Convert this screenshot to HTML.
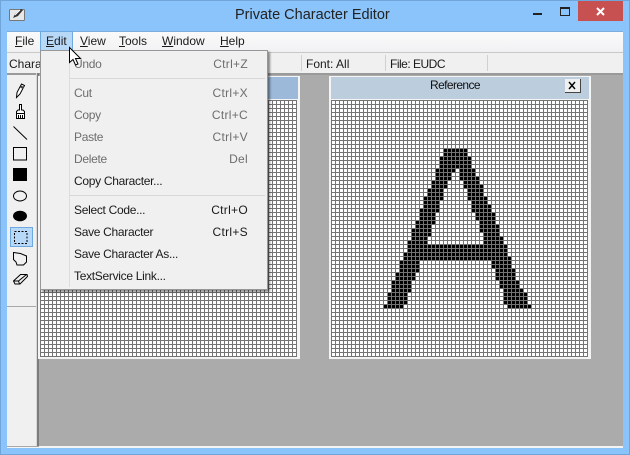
<!DOCTYPE html>
<html>
<head>
<meta charset="utf-8">
<style>
html,body{margin:0;padding:0;width:630px;height:455px;overflow:hidden;background:#8ac4fb}
body{position:relative;font:12px "Liberation Sans",sans-serif;color:#1a1a1a}
.a{position:absolute}
.t{position:absolute;white-space:nowrap;line-height:14px}
.m{letter-spacing:-.3px}
.g{color:#6d6d6d}
.r{position:absolute;white-space:nowrap;line-height:14px;right:382px;letter-spacing:.3px}
.grid{position:absolute;top:100px;width:257px;height:257px;background-image:linear-gradient(to right,#747474 1px,transparent 1px),linear-gradient(#747474 1px,transparent 1px);background-size:4px 4px}
svg{position:absolute;left:0;top:0}
u{text-decoration:underline}
</style>
</head>
<body>
<div class="a" style="left:0;top:0;width:630px;height:1px;background:#6fa5d8"></div>
<div class="a" style="left:0;top:0;width:1px;height:455px;background:#6fa5d8"></div>
<div class="a" style="left:629px;top:0;width:1px;height:455px;background:#6fa5d8"></div>
<div class="a" style="left:0;top:454px;width:630px;height:1px;background:#6fa5d8"></div>

<!-- title bar -->
<div class="t" style="left:235px;top:7px;font-size:14.5px;line-height:17px;color:#222">Private Character Editor</div>
<div class="a" style="left:578px;top:1px;width:45px;height:20px;background:#c75050"></div>
<div class="a" style="left:533px;top:13px;width:9px;height:2px;background:#222"></div>
<div class="a" style="left:560px;top:7px;width:8px;height:6px;border:1px solid #222;border-top-width:2px"></div>

<!-- client -->
<div class="a" style="left:7px;top:31px;width:616px;height:417px;background:#ababab"></div>
<div class="a" style="left:7px;top:31px;width:616px;height:1px;background:#7eaedd"></div>
<div class="a" style="left:7px;top:32px;width:616px;height:19px;background:linear-gradient(#fafafa,#f2f2f4)"></div>
<div class="a" style="left:7px;top:51px;width:616px;height:3px;background:#f0f0f0"></div>
<div class="a" style="left:7px;top:52px;width:616px;height:1px;background:#c8c8c8"></div>
<div class="a" style="left:7px;top:53px;width:616px;height:20px;background:#f0f0f0"></div>
<div class="a" style="left:7px;top:73px;width:616px;height:2px;background:#9a9a9a"></div>
<div class="a" style="left:301px;top:55px;width:1px;height:16px;background:#d0d0d0"></div>
<div class="a" style="left:385px;top:55px;width:1px;height:16px;background:#d0d0d0"></div>
<div class="a" style="left:487px;top:55px;width:1px;height:16px;background:#d0d0d0"></div>
<div class="t" style="left:9px;top:57px">Chara</div>
<div class="t" style="left:306px;top:57px">Font: All</div>
<div class="t" style="left:390px;top:57px;letter-spacing:-.5px">File: EUDC</div>

<!-- left toolbox -->
<div class="a" style="left:7px;top:75px;width:30px;height:371px;background:#f0f0f0"></div>
<div class="a" style="left:7px;top:306px;width:30px;height:1px;background:#a8a8a8"></div>
<div class="a" style="left:36px;top:73px;width:1px;height:373px;background:#d8d8d8"></div>
<div class="a" style="left:37px;top:73px;width:2px;height:374px;background:#7c7c7c"></div>
<div class="a" style="left:7px;top:446px;width:616px;height:2px;background:#f4f4f4"></div>
<div class="a" style="left:7px;top:446px;width:32px;height:1px;background:#a8a8a8"></div>
<div class="a" style="left:10px;top:227px;width:21px;height:18px;background:#b8d8f8;border:1px solid #6ea8e0"></div>

<!-- MDI windows -->
<div class="a" style="left:38px;top:76px;width:262px;height:283px;background:#f4f4f4"></div>
<div class="a" style="left:40px;top:77px;width:258px;height:22px;background:#9db9d9"></div>
<div class="a" style="left:329px;top:76px;width:262px;height:283px;background:#f4f4f4"></div>
<div class="a" style="left:331px;top:77px;width:258px;height:22px;background:#bccddd"></div>
<div class="t" style="left:430px;top:78px;color:#111;letter-spacing:-.6px">Reference</div>
<div class="a" style="left:565px;top:79px;width:15px;height:13px;background:#f0f0f0;border-right:1px solid #444;border-bottom:1px solid #444"></div>

<svg width="630" height="455" viewBox="0 0 630 455">
<rect x="40" y="100" width="257" height="257" fill="#fff"/>
<rect x="331" y="100" width="257" height="257" fill="#fff"/>
<g transform="translate(331,100) scale(4)" shape-rendering="crispEdges">
<path fill="#000" d="M28 12h6v2h-6zM27 14h8v3h-8zM26 17h5v1h-5zM32 17h4v1h-4zM26 18h4v2h-4zM32 18h4v1h-4zM32 19h5v1h-5zM25 20h4v2h-4zM33 20h4v1h-4zM33 21h5v1h-5zM24 22h4v2h-4zM34 22h4v2h-4zM23 24h5v1h-5zM34 24h5v1h-5zM23 25h4v2h-4zM35 25h4v1h-4zM35 26h5v2h-5zM22 27h5v1h-5zM22 28h4v2h-4zM36 28h5v2h-5zM21 30h5v1h-5zM37 30h4v1h-4zM21 31h4v1h-4zM37 31h5v2h-5zM20 32h5v2h-5zM38 33h4v1h-4zM20 34h4v1h-4zM38 34h5v2h-5zM19 35h5v1h-5zM19 36h25v2h-25zM18 38h26v1h-26zM18 39h27v1h-27zM17 40h5v3h-5zM40 40h5v2h-5zM41 42h5v3h-5zM16 43h5v2h-5zM15 45h5v3h-5zM42 45h5v2h-5zM43 47h5v1h-5zM14 48h5v3h-5zM43 48h6v3h-6zM13 51h5v1h-5zM44 51h6v1h-6z"/>
</g>

<!-- close X glyphs -->
<path d="M597 8l7 7M604 8l-7 7" stroke="#fff" stroke-width="2" fill="none"/>
<path d="M569 82l6 7M575 82l-6 7" stroke="#000" stroke-width="1.4" fill="none"/>

<!-- app icon -->
<rect x="9.5" y="9.5" width="15" height="11" rx="1" fill="#e8e8e8" stroke="#777"/>
<path d="M13 18l2-4 6-5 2 1-5 6z" fill="#333"/>
<path d="M15 15l5-5" stroke="#fff" stroke-width="1"/>

<!-- tools -->
<g fill="none" stroke="#000" stroke-width="1">
<path d="M16.500 97.500l.5-5 4.500-8.500 3 1.500-4.500 8.500z" fill="#fff"/>
<path d="M21 85.500l3 1.500-1 2-3-1.500z" fill="#444" stroke="none"/>
<path d="M19.500 104.500h2v5.500h1.500l1.500 1.500v7h-8v-7l1.500-1.500h1.500z" fill="#fff"/>
<path d="M16.500 113.500h8M18.500 115v3.500M20.500 115v3.500M22.500 115v3.500"/>
<path d="M13.500 126.500l13.500 13"/>
<rect x="13.500" y="147.500" width="13" height="12.500"/>
<rect x="13" y="168" width="14" height="13" fill="#000" stroke="none"/>
<ellipse cx="20" cy="196" rx="6.500" ry="5"/>
<ellipse cx="20" cy="216" rx="7" ry="5.300" fill="#000" stroke="none"/>
<rect x="14.500" y="231.500" width="12.500" height="12" stroke-dasharray="2 1.500"/>
<path d="M13.500 252.500l7 1 6 2.500v6l-3 3h-6.500l-1-3-2.500-2.500z"/>
<path d="M13.500 281l7-6.500h6.500l.5 2-7.500 7.500h-5zM19.500 284l-1-3h-5M18.500 281l8-6.500"/>
</g>
</svg>

<div class="grid" style="left:40px"></div>
<div class="grid" style="left:331px"></div>

<!-- menu bar -->
<div class="a" style="left:40px;top:31px;width:31px;height:18px;background:#b8d8f8;border:1px solid #6ea8e0"></div>
<div class="t" style="left:15px;top:34px"><u>F</u>ile</div>
<div class="t" style="left:46px;top:34px"><u>E</u>dit</div>
<div class="t" style="left:80px;top:34px"><u>V</u>iew</div>
<div class="t" style="left:119px;top:34px"><u>T</u>ools</div>
<div class="t" style="left:162px;top:34px"><u>W</u>indow</div>
<div class="t" style="left:220px;top:34px"><u>H</u>elp</div>

<!-- dropdown -->
<div class="a" style="left:40px;top:50px;width:226px;height:238px;background:#f0f0f0;border:1px solid #979797;box-shadow:2px 2px 2px rgba(0,0,0,.45)"></div>
<div class="a" style="left:69px;top:52px;width:1px;height:235px;background:#dcdcdc"></div>
<div class="a" style="left:70px;top:78px;width:195px;height:1px;background:#d8d8d8"></div>
<div class="a" style="left:70px;top:195px;width:195px;height:1px;background:#d8d8d8"></div>

<div class="t g m" style="left:74px;top:57px">Undo</div><div class="r g" style="top:57px">Ctrl+Z</div>
<div class="t g m" style="left:74px;top:86px">Cut</div><div class="r g" style="top:86px">Ctrl+X</div>
<div class="t g m" style="left:74px;top:108px">Copy</div><div class="r g" style="top:108px">Ctrl+C</div>
<div class="t g m" style="left:74px;top:130px">Paste</div><div class="r g" style="top:130px">Ctrl+V</div>
<div class="t g m" style="left:74px;top:152px">Delete</div><div class="r g" style="top:152px">Del</div>
<div class="t m" style="left:74px;top:174px">Copy Character...</div>
<div class="t m" style="left:74px;top:203px">Select Code...</div><div class="r" style="top:203px">Ctrl+O</div>
<div class="t m" style="left:74px;top:225px">Save Character</div><div class="r" style="top:225px">Ctrl+S</div>
<div class="t m" style="left:74px;top:247px">Save Character As...</div>
<div class="t m" style="left:74px;top:269px">TextService Link...</div>

<!-- cursor -->
<svg width="630" height="455" viewBox="0 0 630 455">
<path d="M69.500 47.500v15l3.500-3 2.500 5.500 2.500-1-2.500-5.500h5z" fill="#fff" stroke="#000" stroke-width="1"/>
</svg>
</body>
</html>
